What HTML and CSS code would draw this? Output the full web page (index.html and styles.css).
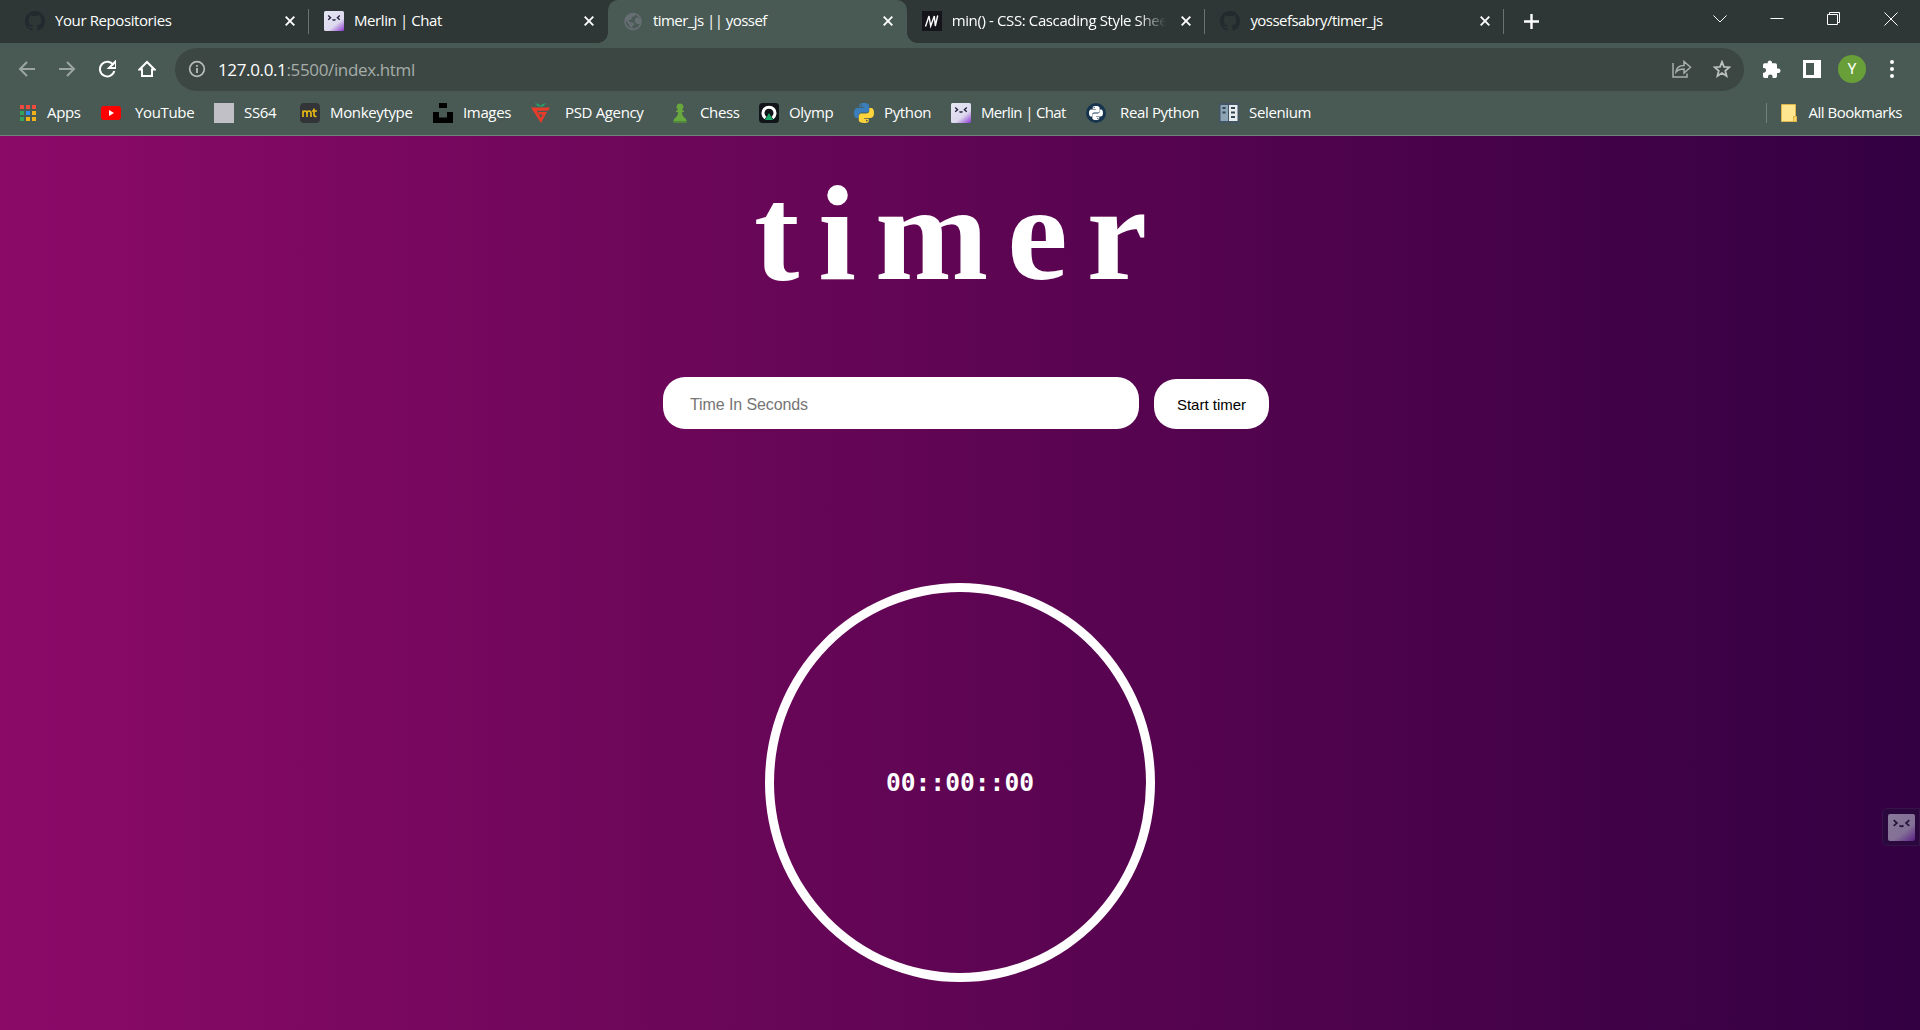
FILE: index.html
```html
<!DOCTYPE html>
<html lang="en">
<head>
<meta charset="utf-8">
<title>timer_js || yossef</title>
<link rel="stylesheet" href="styles.css">
</head>
<body>
<svg class="defs" width="0" height="0" aria-hidden="true">
  <defs>
    <linearGradient id="merlin-bg" x1="0.2" y1="0" x2="1" y2="1"><stop offset="0" stop-color="#e4e6f2"/><stop offset=".6" stop-color="#ddd8ee"/><stop offset="1" stop-color="#8a38cf"/></linearGradient>
    <symbol id="github" viewBox="0 0 16 16"><path d="M8 0C3.58 0 0 3.58 0 8c0 3.54 2.29 6.53 5.47 7.59.4.07.55-.17.55-.38 0-.19-.01-.82-.01-1.49-2.01.37-2.53-.49-2.69-.94-.09-.23-.48-.94-.82-1.13-.28-.15-.68-.52-.01-.53.63-.01 1.08.58 1.23.82.72 1.21 1.87.87 2.33.66.07-.52.28-.87.51-1.07-1.78-.2-3.64-.89-3.64-3.95 0-.87.31-1.59.82-2.15-.08-.2-.36-1.02.08-2.12 0 0 .67-.21 2.2.82a7.6 7.6 0 0 1 4 0c1.53-1.04 2.2-.82 2.2-.82.44 1.1.16 1.92.08 2.12.51.56.82 1.27.82 2.15 0 3.07-1.87 3.75-3.65 3.95.29.25.54.73.54 1.48 0 1.07-.01 1.93-.01 2.2 0 .21.15.46.55.38A8.01 8.01 0 0 0 16 8c0-4.42-3.58-8-8-8z" fill="#24292f"/></symbol>
    <symbol id="merlin" viewBox="0 0 20 20"><rect width="20" height="20" rx="1.5" fill="url(#merlin-bg)"/><path d="M4.2 4.600 6.600 6.700 4.200 8.800M15.800 4.600 13.400 6.700l2.400 2.100M8.500 8.500q1.500 1.300 3 0" fill="none" stroke="#20203a" stroke-width="1.300"/></symbol>
    <symbol id="close" viewBox="0 0 10 10"><path d="m.7.700 8.600 8.600m0-8.600L.7 9.300" stroke="#fff" stroke-width="1.900" fill="none"/></symbol>
    <symbol id="snake" viewBox="0 0 20 20"><path d="M9.800 0C5 0 5.300 2.100 5.300 2.100v2.200h4.600V5H3.500S0 4.600 0 9.900s2.900 5 2.900 5h1.800v-2.500s-.1-3 3-3h4.800s2.700 0 2.700-2.700V2.900S15.600 0 9.800 0zM7.300 1.500a.9.900 0 1 1 0 1.800.9.900 0 0 1 0-1.800z"/></symbol>
  </defs>
</svg>
<header class="browser">
  <div class="tab-strip">
    <div class="tab tab-first"><svg class="fav"><use href="#github"/></svg><span class="tab-title">Your Repositories</span><svg class="close"><use href="#close"/></svg></div>
    <div class="tab divided"><svg class="fav"><use href="#merlin"/></svg><span class="tab-title">Merlin | Chat</span><svg class="close"><use href="#close"/></svg></div>
    <div class="tab active"><svg class="fav" viewBox="0 0 20 20"><circle cx="10" cy="10.500" r="8" fill="none" stroke="#666d73" stroke-width="1.600"/><path d="M3 6 8 2l5 0-1 3-3 1-1 3-3 0 2 2 4 1 0 2-2 1 1 3-3-2-2-4-3-3zM12 8l2-2 4 3-1 4-3 0-2-2z" fill="#666d73"/></svg><span class="tab-title tight">timer_js || yossef</span><svg class="close"><use href="#close"/></svg></div>
    <div class="tab"><svg class="fav" viewBox="0 0 20 20"><path fill="#15141a" d="M0 0h20v20H0z"/><path d="M3.500 15.500 7 5l1.700 10L12.300 5l1 10 2.400-10.500" fill="none" stroke="#fff" stroke-width="1.400"/></svg><span class="tab-title fade">min() - CSS: Cascading Style Sheets</span><svg class="close"><use href="#close"/></svg></div>
    <div class="tab divided"><svg class="fav"><use href="#github"/></svg><span class="tab-title tight">yossefsabry/timer_js</span><svg class="close"><use href="#close"/></svg></div>
    <div class="new-tab"><svg width="15" height="15" viewBox="0 0 15 15"><path d="M7.500 0v15M0 7.500h15" stroke="#fff" stroke-width="2.400"/></svg></div>
    <div class="window-controls">
      <svg width="14" height="14" viewBox="0 0 14 14"><path d="m.5 3.500 6.500 6.500 6.500-6.500"/></svg>
      <svg width="14" height="14" viewBox="0 0 14 14"><path d="M.5 6.500h13"/></svg>
      <svg width="14" height="14" viewBox="0 0 14 14"><path d="M.5 2.500h10v10H.5zM2.500 2.500v-2h10v10h-2"/></svg>
      <svg width="14" height="14" viewBox="0 0 14 14"><path d="m.5.500 13 13m0-13-13 13"/></svg>
    </div>
  </div>

  <div class="toolbar">
    <div class="nav">
      <svg class="dim" width="18" height="18" viewBox="0 0 18 18"><path d="M17 9H2m7-7L2 9l7 7"/></svg>
      <svg class="dim" width="18" height="18" viewBox="0 0 18 18"><path d="M1 9h15M9 2l7 7-7 7"/></svg>
      <svg width="18" height="18" viewBox="0 0 18 18"><path d="M15.500 5.300A7.300 7.300 0 1 0 16.300 11" stroke-width="2.200"/><path d="M18 1v7h-7z" fill="#fff" stroke="none"/></svg>
      <svg width="18" height="18" viewBox="0 0 18 18"><path d="M1.500 9.500 9 2l7.500 7.500H14V16H4V9.500z" stroke-width="2"/></svg>
    </div>
    <div class="omnibox">
      <svg class="info" width="18" height="18" viewBox="0 0 18 18"><circle cx="9" cy="9" r="7.300" fill="none" stroke="#b6bcba" stroke-width="1.700"/><path d="M9 8v5M9 5v1.800" stroke="#b6bcba" stroke-width="1.800"/></svg>
      <span class="url"><b>127.0.0.1</b>:5500/index.html</span>
      <svg class="share" width="20" height="18" viewBox="0 0 20 18"><path d="M1 3v14h14v-3.500M4 12c.5-4 3.500-6.500 8-6.500V1.500l6.500 5.800L12 13V9c-3.500 0-6 .8-8 3z"/></svg>
      <svg class="star" width="18" height="18" viewBox="0 0 18 18"><path d="m9 1.800 2 5 5.400.4-4.100 3.500 1.300 5.300L9 13.100 4.400 16l1.300-5.300L1.600 7.200l5.400-.4z"/></svg>
    </div>
    <svg class="puzzle" width="18" height="18" viewBox="0 0 18 18"><path d="M15.300 8.500H14V5a1.700 1.700 0 0 0-1.700-1.700H9V2.200a2.200 2.200 0 0 0-4.300 0v1.100H1.700A1.700 1.700 0 0 0 0 5v3h1.200a2.400 2.400 0 0 1 0 4.700H0v3.500A1.700 1.700 0 0 0 1.700 18H5v-1.200a2.300 2.300 0 0 1 4.600 0V18h2.700a1.700 1.700 0 0 0 1.700-1.700V13h1.300a2.250 2.250 0 0 0 0-4.500z" fill="#fff"/></svg>
    <svg class="panel" width="18" height="18" viewBox="0 0 18 18"><path fill="#fff" fill-rule="evenodd" d="M0 0h18v18H0zM3 3v12h8V3z"/></svg>
    <div class="avatar">Y</div>
    <svg class="dots" width="4" height="18" viewBox="0 0 4 18"><path d="M2 2h0M2 9h0M2 16h0" stroke="#fff" stroke-width="4" stroke-linecap="round"/></svg>
  </div>

  <div class="bookmarks">
    <div class="bm apps"><svg viewBox="0 0 20 20"><path fill="#ee4b3e" d="M1 2h4v4H1zM7 2h4v4H7zM13 2h4v4h-4z"/><path fill="#34a35a" d="M1 8h4v4H1zM1 14h4v4H1z"/><path fill="#318bef" d="M7 8h4v4H7z"/><path fill="#f5b31a" d="M13 8h4v4h-4zM7 14h4v4H7zM13 14h4v4h-4z"/></svg><span>Apps</span></div>
    <div class="bm youtube"><svg viewBox="0 0 20 20"><rect y="3" width="20" height="14" rx="3" fill="red"/><path d="m8 7 5 3-5 3z" fill="#fff"/></svg><span>YouTube</span></div>
    <div class="bm ss64"><svg viewBox="0 0 20 20"><path d="M0 0h20v20H0z" fill="#c1c0c7"/></svg><span>SS64</span></div>
    <div class="bm monkey"><svg viewBox="0 0 20 20"><rect width="20" height="20" rx="4" fill="#323437"/><path d="M3 14V7.500m0 3q0-2.500 2-2.500t2 2.500V14m0-3.500Q7 8 9 8t2 2.500V14M14 5.500v6.500q0 1.500 2.500 1.500M12 8h5" fill="none" stroke="#e2b714" stroke-width="1.700"/></svg><span>Monkeytype</span></div>
    <div class="bm images"><svg viewBox="0 0 20 20"><path d="M6 0h8v5H6zM0 9h6v5.500h8V9h6v11H0z"/></svg><span>Images</span></div>
    <div class="bm psd"><svg viewBox="0 0 20 20"><path d="M0 4.500h19l-2 3.200H5.800l4 7.300 2-3.500H8.500L7 9h9l-6 11z" fill="#e93b2a"/><path d="m4 0 4 1.500L9.500 3 11 1.500 15 0l-3 3.500H7z" fill="#20a56b"/></svg><span>PSD Agency</span></div>
    <div class="bm chess"><svg viewBox="0 0 20 20"><path d="M10 .5a3.400 3.400 0 0 1 2 6.200l2 1.300v1h-2c0 3 1 4.500 3.500 6.500q1.500 1.500 1 4h-13q-.5-2.500 1-4C7 13.500 8 12 8 9H6V8l2-1.300A3.400 3.400 0 0 1 10 .5z" fill="#69a73f"/><path d="M3.500 18h13v1.500h-13z" fill="#4d873e"/></svg><span>Chess</span></div>
    <div class="bm olymp"><svg viewBox="0 0 20 20"><rect width="20" height="20" rx="3.500" fill="#11151a"/><path d="M6.500 15a6 6 0 1 1 7 0" fill="none" stroke="#fff" stroke-width="3"/><path d="m10 10 4 7H6z" fill="#18a866"/></svg><span>Olymp</span></div>
    <div class="bm python"><svg viewBox="0 0 20 20"><use href="#snake" fill="#3c7ebb"/><use href="#snake" fill="#ffd43b" transform="rotate(180 10 10)"/></svg><span>Python</span></div>
    <div class="bm merlin"><svg><use href="#merlin"/></svg><span>Merlin | Chat</span></div>
    <div class="bm real"><svg viewBox="0 0 20 20"><circle cx="10" cy="10" r="10" fill="#17344f"/><g transform="translate(3 3) scale(.7)" fill="#fff"><use href="#snake" width="20" height="20"/><use href="#snake" width="20" height="20" transform="rotate(180 10 10)"/></g></svg><span>Real Python</span></div>
    <div class="bm selenium"><svg viewBox="0 0 20 20"><path fill="#435565" d="M0 0h20v20H0z"/><path fill="#8ea5b6" d="M1.500 2H9v16H1.500z"/><path fill="#e8ecef" d="M10 2h8.500v16H10z"/><path fill="#334653" d="M3.500 4h3v2h-3zM3.500 8.500h3v2h-3zM12 4h4v2h-4zM12 8.500h4v2h-4zM12 13h4v2h-4z"/></svg><span>Selenium</span></div>
    <div class="bm all"><svg viewBox="0 0 20 20"><path d="M1.500 1.500h14v12h1v5h-15z" fill="#ffe68f" stroke="#dfb64a"/><path d="M13.500 18.500v-5h3v5z" fill="#ffd869" stroke="#dfb64a"/></svg><span>All Bookmarks</span></div>
  </div>
</header>

<main class="page">
  <h1>timer</h1>
  <form class="timer-form">
    <input type="text" placeholder="Time In Seconds">
    <button type="button">Start timer</button>
  </form>
  <div class="dial"><span>00::00::00</span></div>
  <div class="merlin-widget"><svg><use href="#merlin"/></svg></div>
</main>
</body>
</html>
```
FILE: styles.css
```css
* { box-sizing: border-box; }
body { margin: 0; height: 1030px; overflow: hidden; display: flex; flex-direction: column; font-family: "Open Sans", "Noto Sans", sans-serif; color: #fff; }
svg { display: block; flex: none; }
.defs { position: absolute; }
.browser { flex: none; height: 136px; background: #495a54; border-bottom: 1px solid #73817c; }

/* Tabs */
.tab-strip { height: 43px; display: flex; background: #2e3735; }
.tab { width: 299px; display: flex; align-items: center; padding: 0 14px 1px 15px; position: relative; font-size: 15px; letter-spacing: -.4px; }
.tab-first { width: 309px; padding-left: 25px; }
.tab:nth-child(n+3) { width: 298.700px; }
.tab.divided::after, .tab-first::after { content: ""; position: absolute; right: 0; top: 9px; width: 1px; height: 25px; background: #69726f; }
.tab.divided:nth-child(2)::after { display: none; }
.tab:nth-child(4)::after { content: ""; position: absolute; right: 0; top: 9px; width: 1px; height: 25px; background: #69726f; }
.tab.active { background: #495a54; border-radius: 10px 10px 0 0; }
.tab.active::before, .tab.active::after { content: ""; position: absolute; bottom: 0; width: 10px; height: 10px; }
.tab.active::before { left: -10px; background: radial-gradient(circle at 0 0, transparent 9.5px, #495a54 10px); }
.tab.active::after { right: -10px; background: radial-gradient(circle at 100% 0, transparent 9.5px, #495a54 10px); }
.fav { width: 20px; height: 20px; margin-right: 10px; }
.tab-title { flex: 1; min-width: 0; overflow: hidden; white-space: nowrap; padding-bottom: 2px; }
.tight { letter-spacing: -.55px; }
.fade { margin-right: 15px; letter-spacing: -.38px; -webkit-mask-image: linear-gradient(90deg, #000 87%, transparent); mask-image: linear-gradient(90deg, #000 87%, transparent); }
.close { width: 10px; height: 10px; }
.new-tab { display: flex; align-items: center; margin-left: 20px; }
.window-controls { display: flex; gap: 43px; margin: 12px 22px 0 auto; }
.window-controls path { fill: none; stroke: #fff; stroke-width: 1; }

/* Address row */
.toolbar { height: 53px; display: flex; align-items: center; padding: 0 26px 1px 18px; }
.nav { display: flex; gap: 22px; width: 157px; flex: none; }
.nav path { fill: none; stroke: #fff; stroke-width: 2; }
.nav .dim { opacity: .45; }
.omnibox { flex: 1; height: 43px; border-radius: 22px; background: #3c4743; display: flex; align-items: center; padding: 0 13px; }
.url { flex: 1; margin-left: 12px; font-size: 17px; letter-spacing: -.36px; color: #a6adaa; }
.url b { font-weight: 400; color: #fff; }
.share { margin-right: 21px; }
.share path { fill: none; stroke: #a8afac; stroke-width: 1.500; }
.star path { fill: none; stroke: #bac0be; stroke-width: 1.800; }
.puzzle { margin-left: 19px; }
.panel { margin-left: 22px; }
.avatar { width: 28px; height: 28px; margin: 0 24px 0 17px; border-radius: 50%; background: #689f38; text-align: center; font: 15px/28px Roboto, sans-serif; }

/* Bookmarks */
.bookmarks { height: 39px; display: flex; align-items: center; padding: 0 18px 5px 19px; font-size: 15px; letter-spacing: -.35px; white-space: nowrap; }
.bm { display: flex; align-items: center; gap: 10px; flex: none; }
.bm svg { width: 20px; height: 20px; }
.bm span { padding-bottom: 2px; }
.apps { width: 82px; gap: 8px; }
.youtube { width: 113px; gap: 14px; }
.ss64 { width: 86px; }
.monkey { width: 133px; }
.images { width: 98px; }
.psd { width: 139px; gap: 14px; }
.chess { width: 89px; }
.olymp { width: 95px; }
.python { width: 97px; }
.merlin { width: 135px; letter-spacing: -.65px; }
.real { width: 133px; gap: 14px; }
.all { margin-left: auto; border-left: 1px solid #73817c; padding-left: 13px; height: 20px; gap: 9px; letter-spacing: -.5px; }

/* Timer page */
.page { flex: 1; position: relative; display: flex; flex-direction: column; align-items: center; background: linear-gradient(90deg, #8b0a68, #5f0553 50%, #330042); }
h1 { margin: 24px 0 0; height: 154px; font: bold 136px/147px "Liberation Serif", serif; letter-spacing: 19px; }
.timer-form { display: flex; align-items: flex-end; gap: 15px; margin: 63px 0 0 12px; }
input { width: 476px; height: 52px; padding: 4px 26px 0 27px; border: 0; border-radius: 22px; background: #fff; font: 16px "Liberation Sans", sans-serif; letter-spacing: -.1px; }
input::placeholder { color: #757575; }
button { width: 115px; height: 50px; padding: 1px 0 0; border: 0; border-radius: 22px; background: #fff; color: #000; font: 15px "Liberation Sans", sans-serif; }
.dial { width: 390px; height: 399px; margin-top: 154px; border: 9px solid #fff; border-radius: 50%; display: flex; align-items: center; justify-content: center; font: bold 24.600px "DejaVu Sans Mono", monospace; }
.merlin-widget { position: absolute; right: 0; top: 672px; width: 38px; height: 38px; padding: 5px; border: 1px solid #38134a; border-radius: 5px 0 0 5px; background: #2a083d; }
.merlin-widget svg { width: 27px; height: 27px; opacity: .5; }
```
